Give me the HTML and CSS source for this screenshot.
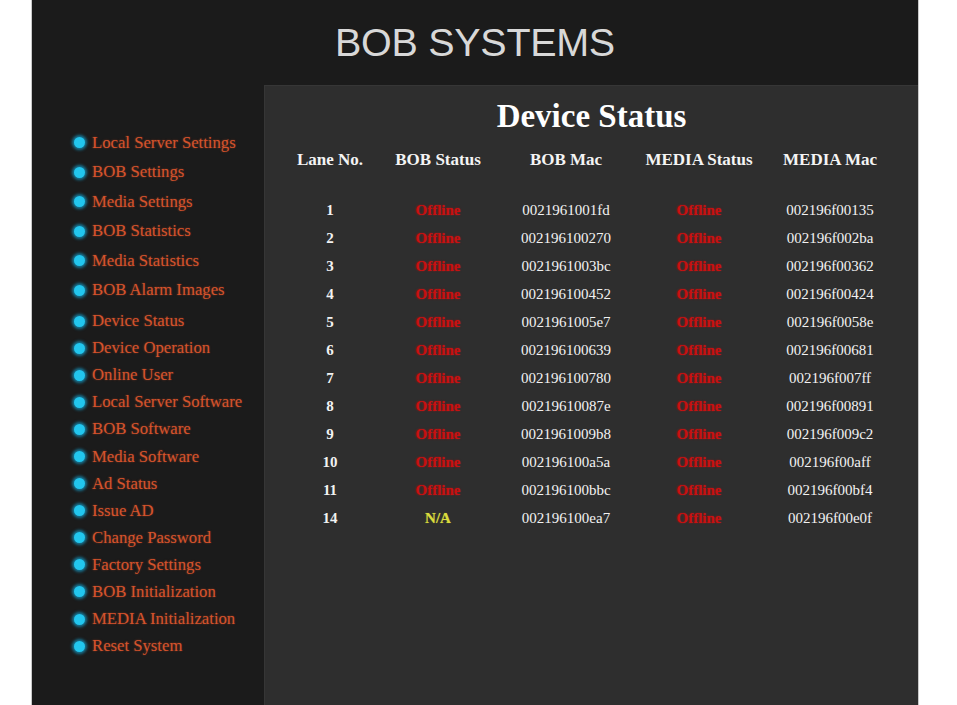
FILE: index.html
```html
<!DOCTYPE html>
<html lang="en">
<head>
<meta charset="utf-8">
<title>BOB SYSTEMS - Device Status</title>
<link rel="stylesheet" href="styles.css">
</head>
<body>
<div class="frame">
  <header class="brand">BOB SYSTEMS</header>
  <div class="body">
    <nav class="sidebar">
      <ul class="menu menu-a">
        <li><span class="dot"></span>Local Server Settings</li>
        <li><span class="dot"></span>BOB Settings</li>
        <li><span class="dot"></span>Media Settings</li>
        <li><span class="dot"></span>BOB Statistics</li>
        <li><span class="dot"></span>Media Statistics</li>
        <li><span class="dot"></span>BOB Alarm Images</li>
      </ul>
      <ul class="menu menu-b">
        <li><span class="dot"></span>Device Status</li>
        <li><span class="dot"></span>Device Operation</li>
        <li><span class="dot"></span>Online User</li>
        <li><span class="dot"></span>Local Server Software</li>
        <li><span class="dot"></span>BOB Software</li>
        <li><span class="dot"></span>Media Software</li>
        <li><span class="dot"></span>Ad Status</li>
        <li><span class="dot"></span>Issue AD</li>
        <li><span class="dot"></span>Change Password</li>
        <li><span class="dot"></span>Factory Settings</li>
        <li><span class="dot"></span>BOB Initialization</li>
        <li><span class="dot"></span>MEDIA Initialization</li>
        <li><span class="dot"></span>Reset System</li>
      </ul>
    </nav>
    <main class="main">
      <h1 class="title">Device Status</h1>
      <div class="grid">
        <div class="row head">
          <span>Lane No.</span><span>BOB Status</span><span>BOB Mac</span><span>MEDIA Status</span><span>MEDIA Mac</span>
        </div>
        <div class="rows">
          <div class="row"><span class="lane">1</span><span class="off">Offline</span><span>0021961001fd</span><span class="off">Offline</span><span>002196f00135</span></div>
          <div class="row"><span class="lane">2</span><span class="off">Offline</span><span>002196100270</span><span class="off">Offline</span><span>002196f002ba</span></div>
          <div class="row"><span class="lane">3</span><span class="off">Offline</span><span>0021961003bc</span><span class="off">Offline</span><span>002196f00362</span></div>
          <div class="row"><span class="lane">4</span><span class="off">Offline</span><span>002196100452</span><span class="off">Offline</span><span>002196f00424</span></div>
          <div class="row"><span class="lane">5</span><span class="off">Offline</span><span>0021961005e7</span><span class="off">Offline</span><span>002196f0058e</span></div>
          <div class="row"><span class="lane">6</span><span class="off">Offline</span><span>002196100639</span><span class="off">Offline</span><span>002196f00681</span></div>
          <div class="row"><span class="lane">7</span><span class="off">Offline</span><span>002196100780</span><span class="off">Offline</span><span>002196f007ff</span></div>
          <div class="row"><span class="lane">8</span><span class="off">Offline</span><span>00219610087e</span><span class="off">Offline</span><span>002196f00891</span></div>
          <div class="row"><span class="lane">9</span><span class="off">Offline</span><span>0021961009b8</span><span class="off">Offline</span><span>002196f009c2</span></div>
          <div class="row"><span class="lane">10</span><span class="off">Offline</span><span>002196100a5a</span><span class="off">Offline</span><span>002196f00aff</span></div>
          <div class="row"><span class="lane">11</span><span class="off">Offline</span><span>002196100bbc</span><span class="off">Offline</span><span>002196f00bf4</span></div>
          <div class="row"><span class="lane">14</span><span class="na">N/A</span><span>002196100ea7</span><span class="off">Offline</span><span>002196f00e0f</span></div>
        </div>
      </div>
    </main>
  </div>
</div>
</body>
</html>
```

FILE: styles.css
```css
html, body {
  margin: 0;
  padding: 0;
  height: 100%;
  background: #ffffff;
  overflow: hidden;
}

.frame {
  margin-left: 31px;
  width: 886px;
  height: 705px;
  border-left: 1px solid #c9c9c9;
  border-right: 1px solid #c9c9c9;
  background: #1b1b1b;
  display: flex;
  flex-direction: column;
}

.brand {
  height: 85px;
  line-height: 85px;
  text-align: center;
  font-family: "Liberation Sans", Arial, sans-serif;
  font-size: 39.5px;
  letter-spacing: -0.3px;
  color: #d8d8d8;
}

.body {
  flex: 1;
  display: flex;
}

.sidebar {
  width: 232px;
  padding-top: 43px;
  font-family: "Liberation Serif", "Times New Roman", serif;
}

.menu {
  list-style: none;
  margin: 0;
  padding: 0 0 0 42px;
}

.menu li {
  display: flex;
  align-items: center;
  font-size: 16.7px;
  color: #d5532c;
  text-shadow: 0 0 2px rgba(210, 80, 40, 0.55);
  white-space: nowrap;
}

.menu-a li {
  height: 29.5px;
}

.menu-b {
  margin-top: 2.5px;
}

.menu-b li {
  height: 27.1px;
}

.dot {
  width: 11px;
  height: 11px;
  border-radius: 50%;
  background: #22c6ee;
  box-shadow: 0 0 3px 2px rgba(20, 170, 220, 0.65);
  margin-right: 7px;
  flex: none;
}

.main {
  flex: 1;
  background: #2e2e2e;
  border-top: 1px solid #363636;
  border-left: 1px solid #363636;
  padding-top: 10px;
  font-family: "Liberation Serif", "Times New Roman", serif;
  color: #ffffff;
}

.title {
  margin: 0;
  height: 40px;
  line-height: 40px;
  text-align: center;
  font-size: 33px;
  font-weight: bold;
  color: #ffffff;
}

.grid {
  margin: 10px 0 0 11px;
}

.row {
  display: grid;
  grid-template-columns: 108px 108px 148px 118px 144px;
  height: 28px;
  align-items: center;
  text-align: center;
  font-size: 15px;
  color: #f2f2f2;
}

.head {
  font-size: 17px;
  font-weight: bold;
  color: #f4f4f4;
  margin-bottom: 22px;
}

.lane {
  font-weight: bold;
}

.off {
  color: #c81010;
  font-weight: bold;
  text-shadow: 0 0 2px rgba(200, 20, 20, 0.7);
}

.na {
  color: #d9dc3c;
  font-weight: bold;
  text-shadow: 0 0 1px rgba(220, 220, 60, 0.6);
}
```
